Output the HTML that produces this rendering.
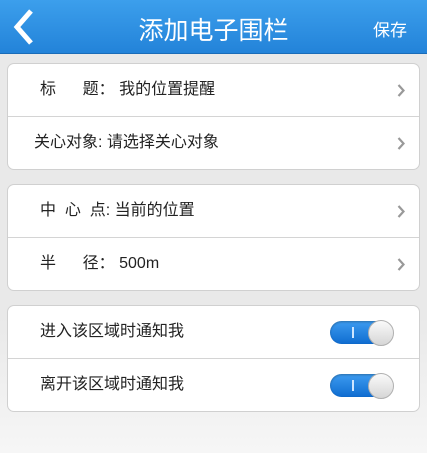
<!DOCTYPE html><html><head><meta charset="utf-8"><style>
body{margin:0;width:427px;height:453px;background:linear-gradient(#e9e9e9,#e9e9e9 70%,#f6f6f6);font-family:"Liberation Sans","Noto Sans CJK SC",sans-serif;position:relative;overflow:hidden}
.hd{position:absolute;left:0;top:0;width:427px;height:53px;background:linear-gradient(#3c9fec,#2383d9);border-bottom:1px solid #1a6cb8}
.t{position:absolute;left:0;width:427px;top:11px;text-align:center;color:#fff;font-size:25px}
.s{position:absolute;right:20px;top:16px;color:#fff;font-size:17px}
.card{position:absolute;left:7px;width:411px;background:#fff;border:1px solid #d0d0d0;border-radius:7px}
.row{height:52px;position:relative;font-size:16px;color:#222;line-height:52px;padding-left:32px}
.row+.row{border-top:1px solid #d4d4d4}
.ar{position:absolute;right:14px;top:20px}
.tg{position:absolute;left:322px;top:15px;width:63px;height:23px;border-radius:12px;background:linear-gradient(#3d9cf0,#0f6cd0);box-shadow:inset 0 1px 2px rgba(0,0,0,.3)}
.tg:before{content:"";position:absolute;left:22px;top:6px;width:2px;height:11px;background:#cfe6ff}
.tg:after{content:"";position:absolute;right:-1px;top:-1px;width:24px;height:24px;border-radius:50%;background:linear-gradient(#fafafa,#d6d6d6);border:1px solid #b0b0b0}
</style></head><body>
<div class="hd"><svg style="position:absolute;left:10px;top:8px" width="26" height="38"><path d="M21 3 L7 19 L21 35" stroke="#fff" stroke-width="5" fill="none"/></svg><div class="t">添加电子围栏</div><div class="s">保存</div></div>
<div class="card" style="top:63px"><div class="row">标&nbsp;&nbsp;&nbsp;&nbsp;&nbsp;&nbsp;题： 我的位置提醒<svg class="ar" width="8" height="13"><path d="M1.5 1 L6.5 6.5 L1.5 12" stroke="#999" stroke-width="2.2" fill="none"/></svg></div><div class="row" style="padding-left:26px">关心对象: 请选择关心对象<svg class="ar" width="8" height="13"><path d="M1.5 1 L6.5 6.5 L1.5 12" stroke="#999" stroke-width="2.2" fill="none"/></svg></div></div>
<div class="card" style="top:184px"><div class="row">中&nbsp;&nbsp;心&nbsp;&nbsp;点: 当前的位置<svg class="ar" width="8" height="13"><path d="M1.5 1 L6.5 6.5 L1.5 12" stroke="#999" stroke-width="2.2" fill="none"/></svg></div><div class="row">半&nbsp;&nbsp;&nbsp;&nbsp;&nbsp;&nbsp;径： 500m<svg class="ar" width="8" height="13"><path d="M1.5 1 L6.5 6.5 L1.5 12" stroke="#999" stroke-width="2.2" fill="none"/></svg></div></div>
<div class="card" style="top:305px"><div class="row">进入该区域时通知我<div class="tg"></div></div><div class="row">离开该区域时通知我<div class="tg"></div></div></div>
</body></html>
